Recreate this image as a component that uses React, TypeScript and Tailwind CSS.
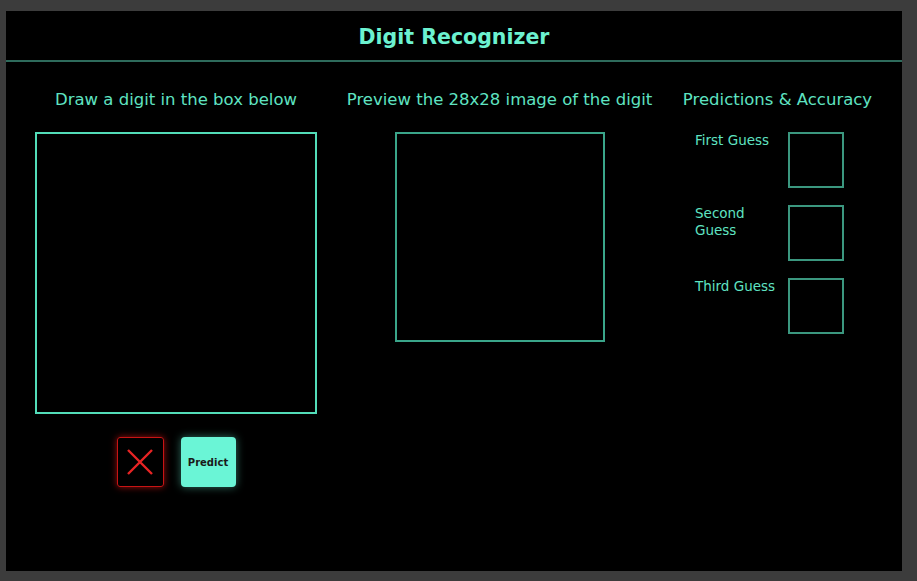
const guesses = ["First Guess", "Second Guess", "Third Guess"];

export default function App() {
  return (
    <div className="h-[581px] bg-[#3c3c3c] pb-[10px] pl-[6px] pr-[15px] pt-[11px] font-['DejaVu_Sans',sans-serif]">
      <div className="flex h-full flex-col bg-black">
        <header className="flex h-[51px] shrink-0 items-center justify-center border-b-2 border-[#2e6b5c] pt-[3px]">
          <h1 className="text-[20.5px] font-bold text-[#6cf2d0]">Digit Recognizer</h1>
        </header>

        <main className="flex gap-[28.5px] px-[29px] pt-[28px] text-[#5fe3c2]">
          {/* drawing canvas */}
          <section className="flex w-[282px] flex-col items-center">
            <h2 className="whitespace-nowrap text-[16.5px] leading-5">Draw a digit in the box below</h2>
            <div className="mt-[22px] h-[282px] w-[282px] border-2 border-[#52dcb8]" />
            <div className="mt-[23px] flex gap-[17px]">
              <button className="flex h-[50px] w-[47px] items-center justify-center rounded-[3px] border border-[#c81414] shadow-[0_0_7px_rgba(220,20,20,0.7)]">
                <svg width="26" height="26" viewBox="0 0 26 26" aria-hidden="true">
                  <path d="M1 1L25 25M25 1L1 25" stroke="#e82424" strokeWidth="2.4" />
                </svg>
              </button>
              <button className="flex h-[50px] w-[55px] items-center justify-center rounded-[4px] bg-[#6af5d6] text-[10px] font-bold text-[#1a1a1a] shadow-[0_0_9px_rgba(106,245,214,0.45)]">
                Predict
              </button>
            </div>
          </section>

          {/* 28x28 preview */}
          <section className="flex w-[308px] flex-col items-center">
            <h2 className="whitespace-nowrap text-[16.5px] leading-5">Preview the 28x28 image of the digit</h2>
            <div className="mt-[22px] h-[210px] w-[210px] border-2 border-[#3aa58a]" />
          </section>

          {/* predictions */}
          <section className="flex w-[191px] flex-col items-center">
            <h2 className="whitespace-nowrap text-[16.5px] leading-5">Predictions &amp; Accuracy</h2>
            <div className="mt-[22px] flex w-full flex-col gap-[17px] pl-[13px]">
              {guesses.map((g) => (
                <div key={g} className="flex">
                  <span className="w-[93px] pr-[6px] text-[13.5px] leading-[17px]">{g}</span>
                  <div className="h-[56px] w-[56px] border-2 border-[#3b977f]" />
                </div>
              ))}
            </div>
          </section>
        </main>
      </div>
    </div>
  );
}
